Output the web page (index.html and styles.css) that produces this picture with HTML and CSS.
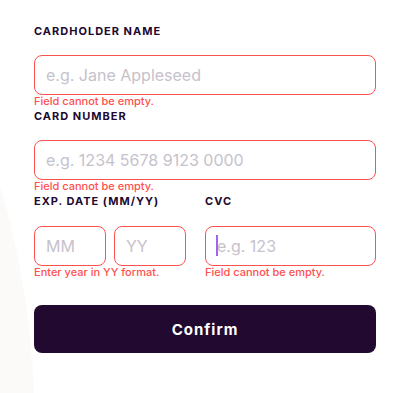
FILE: index.html
```html
<!DOCTYPE html>
<html lang="en">
<head>
    <meta charset="UTF-8">
    <meta name="viewport" content="width=device-width, initial-scale=1.0">
    <title>Card details</title>
    <link rel="stylesheet" href="styles.css">
</head>
<body>
<form class="card-form">
    <label class="field-label" for="name">Cardholder Name</label>
    <input class="field-input" id="name" type="text" placeholder="e.g. Jane Appleseed">
    <p class="field-error">Field cannot be empty.</p>

    <label class="field-label" for="number">Card Number</label>
    <input class="field-input" id="number" type="text" placeholder="e.g. 1234 5678 9123 0000">
    <p class="field-error">Field cannot be empty.</p>

    <div class="field-row">
        <div class="field-group">
            <label class="field-label" for="month">Exp. Date (MM/YY)</label>
            <div class="date-inputs">
                <input class="field-input" id="month" type="text" placeholder="MM">
                <input class="field-input" id="year" type="text" placeholder="YY">
            </div>
            <p class="field-error">Enter year in YY format.</p>
        </div>
        <div class="field-group">
            <label class="field-label" for="cvc">CVC</label>
            <div class="focused">
                <input class="field-input" id="cvc" type="text" placeholder="e.g. 123">
                <span class="caret"></span>
            </div>
            <p class="field-error">Field cannot be empty.</p>
        </div>
    </div>

    <button class="confirm-btn" type="button">Confirm</button>
</form>
</body>
</html>
```

FILE: styles.css
```css
* {
    margin: 0;
    padding: 0;
    box-sizing: border-box;
}

body {
    font-family: Inter, "Liberation Sans", sans-serif;
    color: #21092f;
    min-height: 100vh;
    background: radial-gradient(circle 821px at -786px 420px, #fbfaf8 99.8%, #ffffff 100%);
}

.card-form {
    width: 342px;
    margin-left: 34px;
    padding-top: 23px;
    display: flex;
    flex-direction: column;
}

.field-label {
    display: block;
    font-size: 11px;
    line-height: 16px;
    font-weight: 700;
    letter-spacing: 1px;
    text-transform: uppercase;
    margin-bottom: 16px;
}

.field-input {
    display: block;
    width: 100%;
    height: 40px;
    border: 1px solid #ff5050;
    border-radius: 8px;
    padding: 0 11px;
    font-family: inherit;
    font-size: 16px;
    color: #21092f;
    background: #fff;
    outline: none;
}

.field-input::placeholder {
    color: #c6c2cc;
}

.field-error {
    font-size: 11px;
    line-height: 13px;
    font-weight: 500;
    color: #ff5050;
}

.field-row {
    display: flex;
    gap: 19px;
}

.field-row .field-label {
    margin-bottom: 17px;
}

.field-group:first-child {
    width: 152px;
}

.field-group:last-child {
    flex: 1;
}

.date-inputs {
    display: flex;
    gap: 8px;
}

.focused {
    position: relative;
}

.caret {
    position: absolute;
    left: 11px;
    top: 9px;
    width: 2px;
    height: 21px;
    background: #a463e8;
}

.confirm-btn {
    margin-top: 26px;
    height: 48px;
    border: none;
    border-radius: 8px;
    background: #21092f;
    color: #fff;
    font-family: inherit;
    font-size: 15px;
    font-weight: 700;
    letter-spacing: 1px;
    cursor: pointer;
}
```
